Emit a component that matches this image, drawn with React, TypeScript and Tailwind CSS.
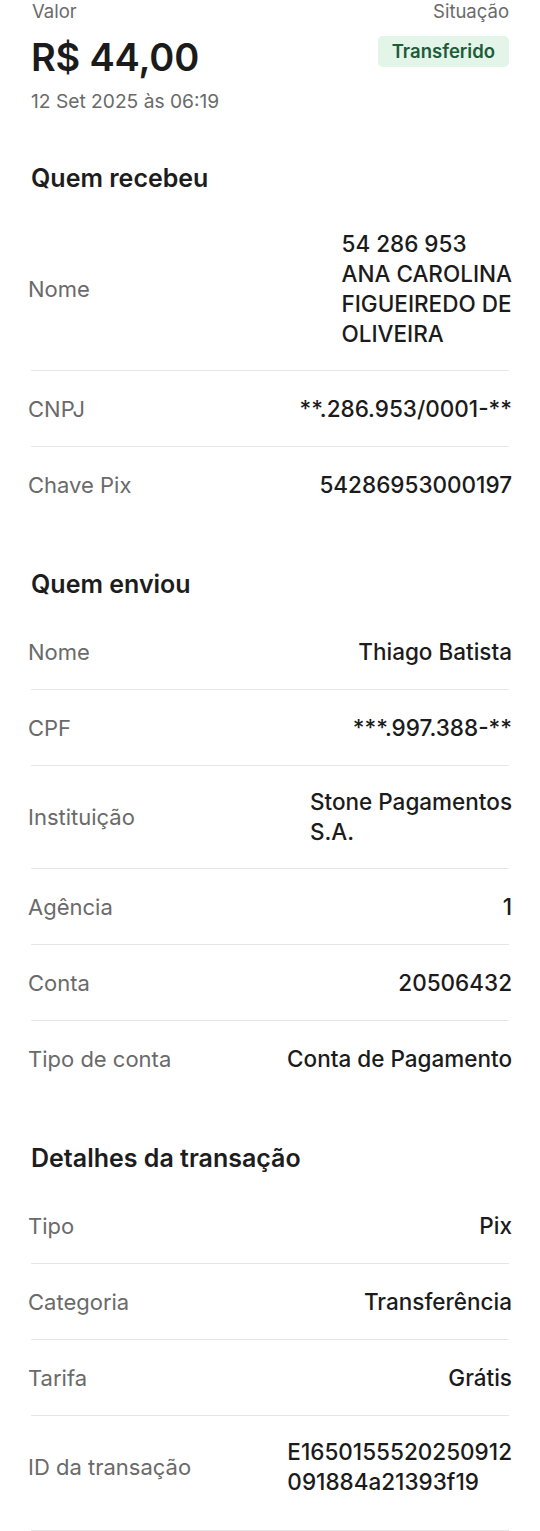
import React from 'react';

type Row = { label: string; value: string | string[] };

const recebeu: Row[] = [
  { label: 'Nome', value: ['54 286 953', 'ANA CAROLINA', 'FIGUEIREDO DE', 'OLIVEIRA'] },
  { label: 'CNPJ', value: '**.286.953/0001-**' },
  { label: 'Chave Pix', value: '54286953000197' },
];

const enviou: Row[] = [
  { label: 'Nome', value: 'Thiago Batista' },
  { label: 'CPF', value: '***.997.388-**' },
  { label: 'Instituição', value: ['Stone Pagamentos', 'S.A.'] },
  { label: 'Agência', value: '1' },
  { label: 'Conta', value: '20506432' },
  { label: 'Tipo de conta', value: 'Conta de Pagamento' },
];

const detalhes: Row[] = [
  { label: 'Tipo', value: 'Pix' },
  { label: 'Categoria', value: 'Transferência' },
  { label: 'Tarifa', value: 'Grátis' },
  { label: 'ID da transação', value: ['E1650155520250912', '091884a21393f19'] },
];

function DetailRow({ row, last }: { row: Row; last: boolean }) {
  const lines = Array.isArray(row.value) ? row.value : [row.value];
  return (
    <div
      className={[
        'flex min-h-[76px] items-center justify-between gap-6 py-[21px]',
        last ? '' : 'border-b border-[#e6e6e6]',
      ].join(' ')}
    >
      <span className="-ml-[3px] text-[22px] leading-[28px] text-[#6a6a6a]">{row.label}</span>
      <div className="-mr-[3px] text-left text-[22.5px] font-medium leading-[30px] text-[#1b1b1b]">
        {lines.map((l) => (
          <div key={l} className="whitespace-nowrap">{l}</div>
        ))}
      </div>
    </div>
  );
}

function Section({ title, rows, className }: { title: string; rows: Row[]; className?: string }) {
  return (
    <section className={className}>
      <h2 className="text-[25px] font-semibold leading-[28px] text-[#1d1d1d]">{title}</h2>
      <div className="mt-[16px]">
        {rows.map((r, i) => (
          <DetailRow key={r.label} row={r} last={i === rows.length - 1} />
        ))}
      </div>
    </section>
  );
}

export default function App() {
  return (
    <div className="min-h-[1531px] w-[540px] bg-white px-[31px] font-['Inter','Noto_Sans',sans-serif]">
      <div className="flex items-center justify-between text-[18.5px] leading-[22px] text-[#6a6a6a]">
        <span className="pl-[1px]">Valor</span>
        <span>Situação</span>
      </div>
      <div className="mt-[12px] flex items-start justify-between">
        <span className="text-[38px] font-semibold leading-[46px] tracking-[-0.2px] text-[#1b1b1b]">R$ 44,00</span>
        <span className="mt-[2px] rounded-[5px] bg-[#e2f5e8] px-[14px] text-[18.5px] font-semibold leading-[31px] text-[#1f5b39]">
          Transferido
        </span>
      </div>
      <div className="mt-[10px] text-[19.2px] leading-[22px] text-[#6a6a6a]">12 Set 2025 às 06:19</div>

      <Section title="Quem recebeu" rows={recebeu} className="mt-[52px]" />
      <Section title="Quem enviou" rows={enviou} className="mt-[47px]" />
      <Section title="Detalhes da transação" rows={detalhes} className="mt-[47px]" />
      <div className="mt-[12px] border-b border-[#e6e6e6]" />
    </div>
  );
}
